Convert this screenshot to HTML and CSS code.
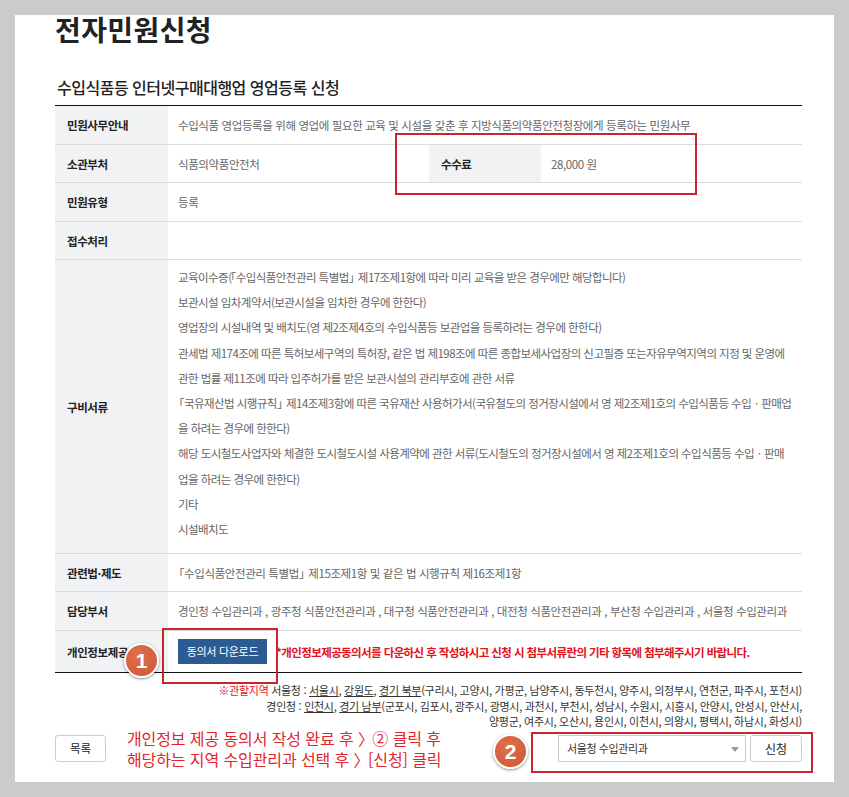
FILE: index.html
```html
<!DOCTYPE html>
<html lang="ko">
<head>
    <meta charset="UTF-8">
    <meta name="viewport" content="width=device-width, initial-scale=1.0">
    <title>전자민원신청</title>
    <link rel="stylesheet" href="styles.css">
</head>
<body>
    <div class="panel">
        <h1 class="page-title">전자민원신청</h1>
        <h2 class="sub-title">수입식품등 인터넷구매대행업 영업등록 신청</h2>

        <table class="info">
            <colgroup>
                <col class="c-label">
                <col class="c-value">
                <col class="c-label2">
                <col>
            </colgroup>
            <tr class="r39">
                <th>민원사무안내</th>
                <td colspan="3">수입식품 영업등록을 위해 영업에 필요한 교육 및 시설을 갖춘 후 지방식품의약품안전청장에게 등록하는 민원사무</td>
            </tr>
            <tr class="r38">
                <th>소관부처</th>
                <td>식품의약품안전처</td>
                <th class="th-mid">수수료</th>
                <td>28,000 원</td>
            </tr>
            <tr class="r39">
                <th>민원유형</th>
                <td colspan="3">등록</td>
            </tr>
            <tr class="r38">
                <th>접수처리</th>
                <td colspan="3"></td>
            </tr>
            <tr>
                <th>구비서류</th>
                <td colspan="3" class="docs">
                    <p>교육이수증(<span class="ob-in">「</span>수입식품안전관리 특별법<span class="cb">」</span> 제17조제1항에 따라 미리 교육을 받은 경우에만 해당합니다)</p>
                    <p>보관시설 임차계약서(보관시설을 임차한 경우에 한한다)</p>
                    <p>영업장의 시설내역 및 배치도(영 제2조제4호의 수입식품등 보관업을 등록하려는 경우에 한한다)</p>
                    <p>관세법 제174조에 따른 특허보세구역의 특허장, 같은 법 제198조에 따른 종합보세사업장의 신고필증 또는자유무역지역의 지정 및 운영에<br>관한 법률 제11조에 따라 입주허가를 받은 보관시설의 관리부호에 관한 서류</p>
                    <p><span class="ob">「</span>국유재산법 시행규칙<span class="cb">」</span> 제14조제3항에 따른 국유재산 사용허가서(국유철도의 정거장시설에서 영 제2조제1호의 수입식품등 수입ㆍ판매업<br>을 하려는 경우에 한한다)</p>
                    <p>해당 도시철도사업자와 체결한 도시철도시설 사용계약에 관한 서류(도시철도의 정거장시설에서 영 제2조제1호의 수입식품등 수입ㆍ판매<br>업을 하려는 경우에 한한다)</p>
                    <p>기타</p>
                    <p>시설배치도</p>
                </td>
            </tr>
            <tr class="r38">
                <th>관련법·제도</th>
                <td colspan="3"><span class="ob">「</span>수입식품안전관리 특별법<span class="cb">」</span> 제15조제1항 및 같은 법 시행규칙 제16조제1항</td>
            </tr>
            <tr class="r39">
                <th>담당부서</th>
                <td colspan="3">경인청 수입관리과 , 광주청 식품안전관리과 , 대구청 식품안전관리과 , 대전청 식품안전관리과 , 부산청 수입관리과 , 서울청 수입관리과</td>
            </tr>
            <tr class="r42 last">
                <th>개인정보제공</th>
                <td colspan="3">
                    <div class="agree">
                        <a class="btn-blue">동의서 다운로드</a>
                        <span class="notice">*개인정보제공동의서를 다운하신 후 작성하시고 신청 시 첨부서류란의 기타 항목에 첨부해주시기 바랍니다.</span>
                    </div>
                </td>
            </tr>
        </table>

        <p class="region">
            <span class="red">※관할지역</span> 서울청 : <u>서울시</u>, <u>강원도</u>, <u>경기 북부</u>(구리시, 고양시, 가평군, 남양주시, 동두천시, 양주시, 의정부시, 연천군, 파주시, 포천시)<br>
            경인청 : <u>인천시</u>, <u>경기 남부</u>(군포시, 김포시, 광주시, 광명시, 과천시, 부천시, 성남시, 수원시, 시흥시, 안양시, 안성시, 안산시,<br>
            양평군, 여주시, 오산시, 용인시, 이천시, 의왕시, 평택시, 하남시, 화성시)
        </p>

        <div class="bottom">
            <a class="btn-line">목록</a>
            <p class="guide">개인정보 제공 동의서 작성 완료 후 <span class="gt">〉</span> ② 클릭 후<br>해당하는 지역 수입관리과 선택 후 <span class="gt">〉</span> [신청] 클릭</p>
            <div class="apply">
                <div class="select">서울청 수입관리과<span class="caret"></span></div>
                <a class="btn-line btn-apply">신청</a>
            </div>
        </div>

        <!-- annotations -->
        <div class="mark box-fee"></div>
        <div class="mark box-down"></div>
        <div class="mark box-apply"></div>
        <div class="num num-1">1</div>
        <div class="num num-2">2</div>
    </div>
</body>
</html>
```

FILE: styles.css
```css
body {
    margin: 0;
    background-color: #cbcbcb;
    padding: 15px 15px 0 15px;
    font-family: "Noto Sans CJK KR", sans-serif;
    height: 797px;
    box-sizing: border-box;
    overflow: hidden;
}
.panel {
    position: relative;
    background-color: #fff;
    width: 819px;
    height: 767px;
    padding: 0 32px 0 40px;
    box-sizing: border-box;
}
.page-title {
    margin: 0;
    font-size: 28px;
    line-height: 28px;
    letter-spacing: 0.4px;
    font-weight: bold;
    color: #222;
}
.sub-title {
    margin: 33px 0 0 2px;
    font-size: 16px;
    line-height: 22px;
    letter-spacing: -0.5px;
    font-weight: 500;
    color: #222;
}
.info {
    margin-top: 7px;
    width: 747px;
    border-collapse: collapse;
    table-layout: fixed;
    border-top: 1px solid #111;
    font-size: 11.5px;
    letter-spacing: -0.4px;
}
.c-label { width: 113px; }
.c-value { width: 261px; }
.c-label2 { width: 112px; }
.info th, .info td {
    border-bottom: 1px solid #dcdcdc;
    padding: 0 10px;
    vertical-align: middle;
    white-space: nowrap;
}
.info th {
    background-color: #f1f2f4;
    color: #222;
    text-align: left;
    padding-left: 12px;
    font-weight: bold;
}
.info td {
    color: #666;
}
/* full-width brackets are too loose in this font */
.info .ob {
    margin-left: -5px;
}
.info .ob-in {
    margin-left: -1px;
}
.info .cb {
    letter-spacing: -5px;
}
.info .r39 { height: 39px; }
.info .r38 { height: 38px; }
.info .r42 { height: 42px; }
.info .last th, .info .last td {
    border-bottom: 1px solid #111;
}
.docs {
    padding-top: 5px !important;
    padding-bottom: 11px !important;
    letter-spacing: -0.55px;
}
.docs p {
    margin: 0;
    line-height: 25.2px;
}
.agree {
    display: flex;
    align-items: center;
    gap: 9px;
}
.btn-blue {
    display: inline-block;
    flex: none;
    background-color: #2c5b93;
    color: #fff;
    height: 25px;
    line-height: 25px;
    width: 89px;
    text-align: center;
    font-size: 11px;
    letter-spacing: -0.3px;
}
.notice {
    color: #e4101c;
    font-weight: bold;
    letter-spacing: -0.6px;
}
.region {
    margin: 10px 0 0 0;
    width: 747px;
    text-align: right;
    font-size: 11px;
    line-height: 15.5px;
    letter-spacing: -0.3px;
    color: #333;
}
.region .red {
    color: #e4101c;
}
.bottom {
    display: flex;
    align-items: center;
    width: 747px;
    margin-top: -2px;
}
.btn-line {
    display: inline-block;
    flex: none;
    box-sizing: border-box;
    width: 51px;
    height: 27px;
    line-height: 25px;
    border: 1px solid #ccc;
    border-radius: 3px;
    text-align: center;
    font-size: 11.5px;
    color: #222;
    background-color: #fff;
}
.guide {
    margin: 0 0 0 21px;
    font-size: 16px;
    line-height: 21px;
    letter-spacing: -0.1px;
    color: #e0262c;
}
.guide .gt {
    letter-spacing: -6px;
}
.apply {
    display: flex;
    gap: 4px;
    margin-left: auto;
}
.select {
    position: relative;
    box-sizing: border-box;
    width: 188px;
    height: 27px;
    line-height: 25px;
    border: 1px solid #ccc;
    padding-left: 8px;
    font-size: 11px;
    letter-spacing: -0.4px;
    color: #333;
}
.caret {
    position: absolute;
    right: 6px;
    top: 11px;
    border-left: 4px solid transparent;
    border-right: 4px solid transparent;
    border-top: 5px solid #999;
}
.btn-apply {
    width: 52px;
    font-size: 12px;
}
.mark {
    position: absolute;
    border: 2px solid #c9252f;
    box-sizing: border-box;
}
.box-fee { left: 380px; top: 118px; width: 302px; height: 62px; }
.box-down { left: 147px; top: 613px; width: 116px; height: 56px; }
.box-apply { left: 516px; top: 717px; width: 282px; height: 41px; }
.num {
    position: absolute;
    width: 35px;
    height: 35px;
    box-sizing: border-box;
    border-radius: 50%;
    border: 2px solid #fff;
    background: radial-gradient(circle at 40% 35%, #e0704c, #cc5633);
    box-shadow: 0 1px 3px rgba(0, 0, 0, 0.45);
    color: #fff;
    font-family: "Liberation Sans", sans-serif;
    font-weight: bold;
    font-size: 21px;
    line-height: 31px;
    text-align: center;
}
.num-1 { left: 109px; top: 628px; }
.num-2 { left: 478px; top: 719px; }
```
